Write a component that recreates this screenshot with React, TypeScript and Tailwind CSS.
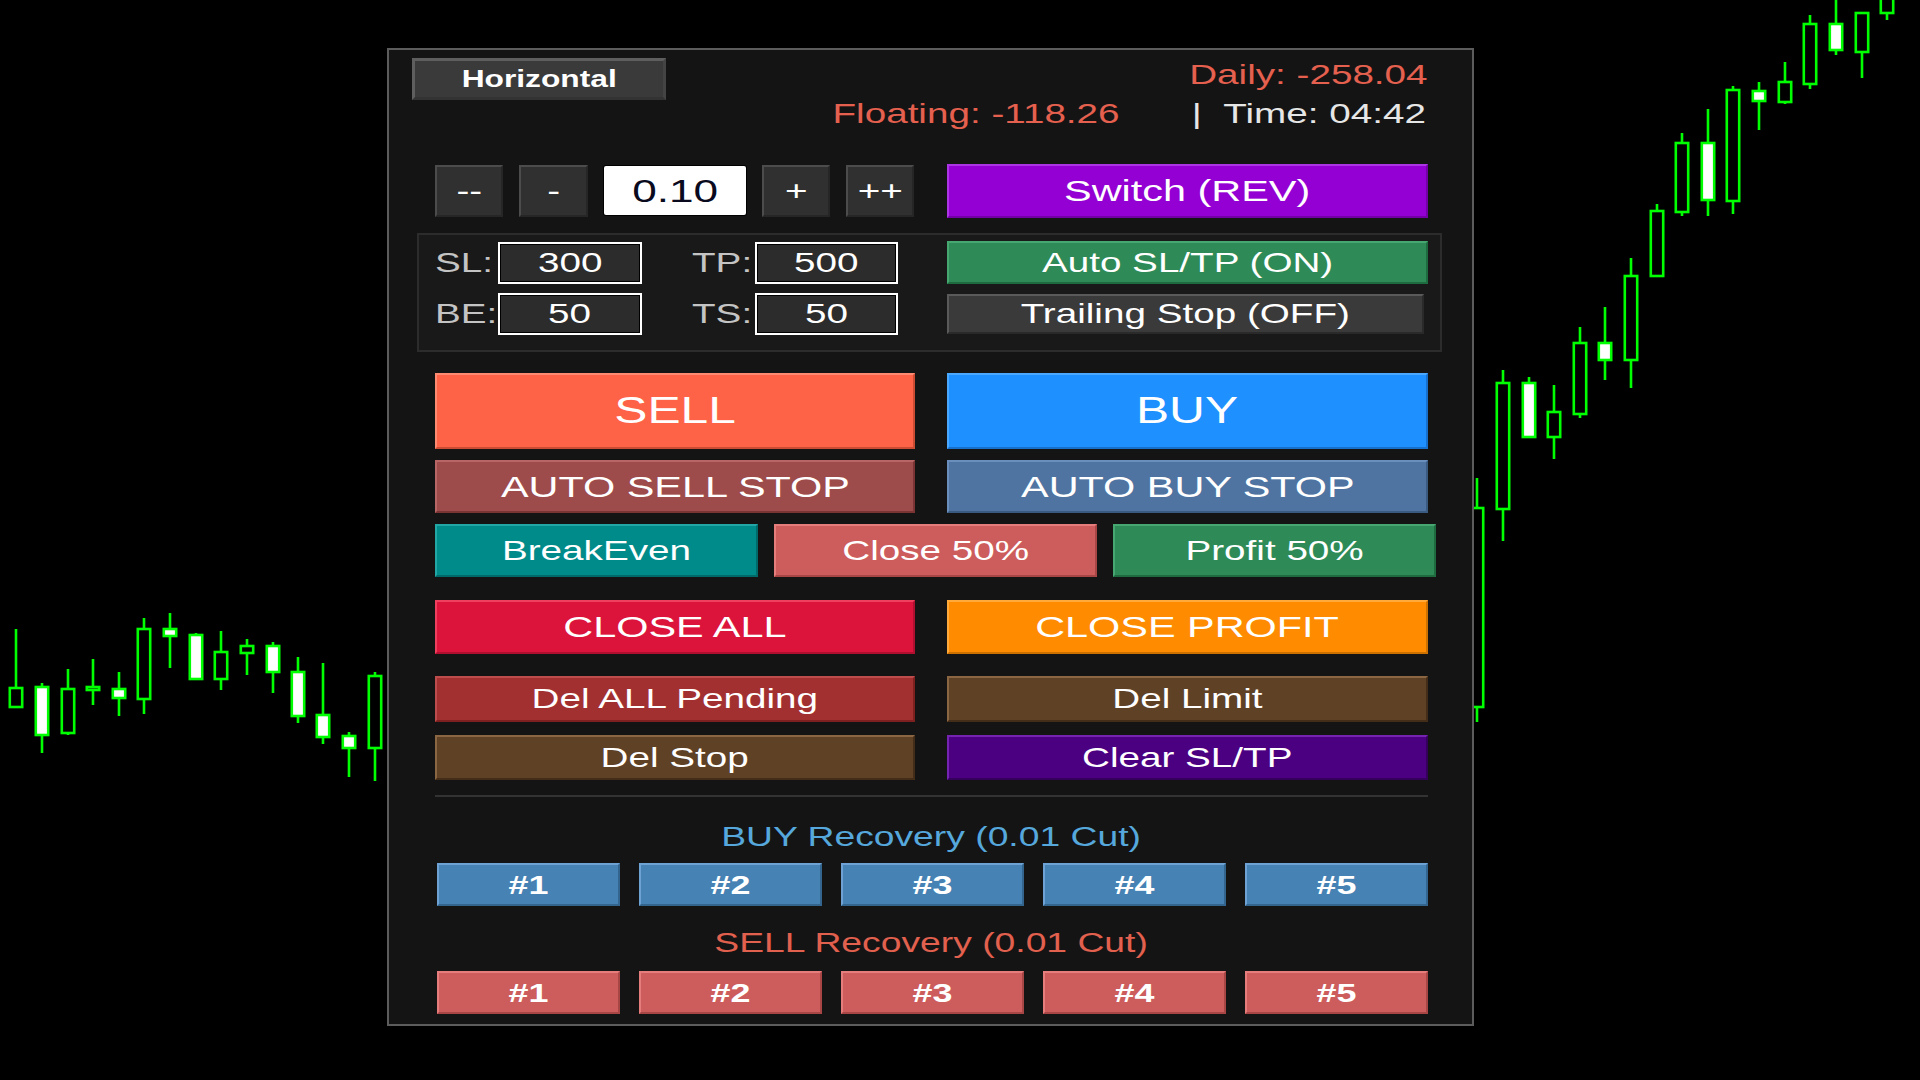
import React from 'react';

type Candle = [number, number, number, number, number, boolean];

// [x, high, low, bodyTop, bodyBottom, whiteBody]
const LEFT_CANDLES: Candle[] = [
  [16, 629, 707, 688, 707, false],
  [42, 683, 753, 687, 735, true],
  [68, 669, 735, 689, 733, false],
  [93, 659, 705, 687, 690, false],
  [119, 672, 716, 689, 698, true],
  [144, 618, 714, 629, 699, false],
  [170, 613, 668, 629, 636, true],
  [196, 633, 679, 635, 679, true],
  [221, 631, 690, 652, 679, false],
  [247, 639, 675, 646, 653, false],
  [273, 642, 693, 646, 672, true],
  [298, 657, 723, 672, 716, true],
  [323, 663, 744, 715, 737, true],
  [349, 732, 777, 736, 748, true],
  [375, 672, 781, 676, 748, false],
];

const RIGHT_CANDLES: Candle[] = [
  [1477, 478, 722, 508, 707, false],
  [1503, 370, 541, 383, 509, false],
  [1529, 377, 437, 383, 437, true],
  [1554, 385, 459, 412, 437, false],
  [1580, 327, 418, 343, 414, false],
  [1605, 307, 380, 343, 360, true],
  [1631, 258, 388, 276, 360, false],
  [1657, 204, 276, 211, 276, false],
  [1682, 133, 216, 143, 212, false],
  [1708, 109, 216, 143, 200, true],
  [1733, 86, 214, 90, 201, false],
  [1759, 82, 130, 91, 101, true],
  [1785, 62, 104, 82, 102, false],
  [1810, 15, 89, 24, 84, false],
  [1836, 0, 55, 24, 50, true],
  [1862, 12, 78, 13, 52, false],
  [1887, -10, 20, -5, 13, false],
];

const Chart = () => (
  <svg
    className="absolute inset-0"
    width={1920}
    height={1080}
    viewBox="0 0 1920 1080"
  >
    {[...LEFT_CANDLES, ...RIGHT_CANDLES].map(([x, hi, lo, top, bot, white], i) => (
      <g key={i} stroke="#00ff00" strokeWidth={2.6}>
        <line x1={x} x2={x} y1={hi} y2={top} />
        <line x1={x} x2={x} y1={bot} y2={lo} />
        <rect
          x={x - 6.2}
          y={top}
          width={12.4}
          height={Math.max(bot - top, 2)}
          fill={white ? '#ffffff' : '#000000'}
        />
      </g>
    ))}
  </svg>
);

const tones = {
  sell: 'bg-[#ff6347] border-t-[#ff8a72] border-l-[#ff8a72] border-b-[#cc4b33] border-r-[#cc4b33]',
  buy: 'bg-[#1e90ff] border-t-[#4ba8ff] border-l-[#4ba8ff] border-b-[#1670cc] border-r-[#1670cc]',
  autoSell: 'bg-[#9e4b4b] border-t-[#b86565] border-l-[#b86565] border-b-[#7a3434] border-r-[#7a3434]',
  autoBuy: 'bg-[#4f74a1] border-t-[#6a8fbd] border-l-[#6a8fbd] border-b-[#3a5a80] border-r-[#3a5a80]',
  teal: 'bg-[#008b8b] border-t-[#22a6a6] border-l-[#22a6a6] border-b-[#006a6a] border-r-[#006a6a]',
  indian: 'bg-[#cd5c5c] border-t-[#e57d7d] border-l-[#e57d7d] border-b-[#a84545] border-r-[#a84545]',
  green: 'bg-[#2e8b57] border-t-[#46a770] border-l-[#46a770] border-b-[#1f6b40] border-r-[#1f6b40]',
  crimson: 'bg-[#dc143c] border-t-[#f0405f] border-l-[#f0405f] border-b-[#b00f2f] border-r-[#b00f2f]',
  orange: 'bg-[#ff8c00] border-t-[#ffaa3a] border-l-[#ffaa3a] border-b-[#cc7000] border-r-[#cc7000]',
  brownRed: 'bg-[#a33030] border-t-[#bd4c4c] border-l-[#bd4c4c] border-b-[#7f2020] border-r-[#7f2020]',
  brown: 'bg-[#5f4126] border-t-[#8a6642] border-l-[#8a6642] border-b-[#432c18] border-r-[#432c18]',
  indigo: 'bg-[#4b0082] border-t-[#7424b0] border-l-[#7424b0] border-b-[#34005c] border-r-[#34005c]',
  violet: 'bg-[#9400d3] border-t-[#ac35e6] border-l-[#ac35e6] border-b-[#7200a6] border-r-[#7200a6]',
  gray: 'bg-[#3a3a3a] border-t-[#5a5a5a] border-l-[#5a5a5a] border-b-[#2a2a2a] border-r-[#2a2a2a]',
  dark: 'bg-[#303030] border-t-[#4c4c4c] border-l-[#4c4c4c] border-b-[#262626] border-r-[#262626]',
  steel: 'bg-[#4682b4] border-t-[#6ea2d4] border-l-[#6ea2d4] border-b-[#34658e] border-r-[#34658e]',
};

type Tone = keyof typeof tones;

const Txt = ({ children, className = '' }: { children: React.ReactNode; className?: string }) => (
  <span className={`inline-block whitespace-nowrap leading-none scale-x-[1.38] ${className}`}>
    {children}
  </span>
);

const Btn = ({
  label,
  tone,
  size,
  text = 'text-[28px]',
}: {
  label: string;
  tone: Tone;
  size: string;
  text?: string;
}) => (
  <div className={`flex items-center justify-center border-2 text-white ${tones[tone]} ${size}`}>
    <Txt className={text}>{label}</Txt>
  </div>
);

const ValueBox = ({ value, size }: { value: string; size: string }) => (
  <div className={`flex items-center justify-center border-2 border-white bg-[#2c2c2c] ring-1 ring-inset ring-black text-white ${size}`}>
    <Txt className="text-[28px]">{value}</Txt>
  </div>
);

const Label = ({ text }: { text: string }) => (
  <div className="flex w-[63px] items-center text-[#c4c4c4]">
    <Txt className="origin-left text-[28px]">{text}</Txt>
  </div>
);

export default function App() {
  return (
    <div className="relative h-[1080px] w-[1920px] overflow-hidden bg-black font-['Liberation_Sans',Arial,sans-serif]">
      <Chart />
      <div className="relative ml-[387px] mt-[48px] flex h-[978px] w-[1087px] flex-col border-2 border-[#5c5c5c] bg-[#141414]">
        {/* header */}
        <div className="flex h-[113px] justify-between">
          <div className="ml-[23px] mt-[8px] flex h-[42px] w-[254px] items-center justify-center border-[3px] border-t-[#5e5e5e] border-l-[#5e5e5e] border-b-[#333333] border-r-[#444444] bg-[#3a3a3a] text-white">
            <Txt className="text-[23px] font-bold">Horizontal</Txt>
          </div>
          <div className="mr-[44px] flex flex-col items-end pt-[9px]">
            <div className="flex h-[32px] w-[239px] items-center justify-center text-[#e5604e]">
              <Txt className="text-[28px]">Daily: -258.04</Txt>
            </div>
            <div className="mt-[7px] flex h-[32px] items-center">
              <div className="flex w-[294px] justify-center text-[#e5604e]">
                <Txt className="text-[28px]">Floating: -118.26</Txt>
              </div>
              <div className="ml-[67px] flex w-[238px] justify-center text-[#e6e6e6]">
                <Txt className="text-[28px]">{'|  Time: 04:42'.replace(/ /g, '\u00a0')}</Txt>
              </div>
            </div>
          </div>
        </div>

        {/* lot row */}
        <div className="ml-[46px] flex h-[55px] items-center gap-[16px]">
          <Btn label="--" tone="dark" size="h-[52px] w-[68px]" />
          <Btn label="-" tone="dark" size="h-[52px] w-[69px]" />
          <div className="flex h-[49px] w-[142px] items-center justify-center rounded-[2px] bg-white ring-1 ring-black">
            <Txt className="text-[32px] text-[#0a0a1e]">0.10</Txt>
          </div>
          <Btn label="+" tone="dark" size="h-[52px] w-[68px]" />
          <Btn label="++" tone="dark" size="h-[52px] w-[68px]" />
          <div className="ml-[17px]">
            <Btn label="Switch (REV)" tone="violet" size="h-[54px] w-[481px]" text="text-[30px]" />
          </div>
        </div>

        {/* SL / TP group */}
        <div className="ml-[28px] mt-[15px] flex h-[119px] w-[1025px] flex-col gap-[9px] border-2 border-[#2c2c2c] bg-[#191919] pl-[16px] pt-[6px]">
          <div className="flex h-[43px] items-center">
            <Label text="SL:" />
            <ValueBox value="300" size="h-[42px] w-[144px]" />
            <div className="ml-[50px] flex">
              <Label text="TP:" />
            </div>
            <ValueBox value="500" size="h-[42px] w-[143px]" />
            <div className="ml-[49px]">
              <Btn label="Auto SL/TP (ON)" tone="green" size="h-[43px] w-[481px]" />
            </div>
          </div>
          <div className="flex h-[42px] items-center">
            <Label text="BE:" />
            <ValueBox value="50" size="h-[42px] w-[144px]" />
            <div className="ml-[50px] flex">
              <Label text="TS:" />
            </div>
            <ValueBox value="50" size="h-[42px] w-[143px]" />
            <div className="ml-[49px]">
              <Btn label="Trailing Stop (OFF)" tone="gray" size="h-[40px] w-[477px]" />
            </div>
          </div>
        </div>

        {/* trade buttons */}
        <div className="ml-[46px] mt-[21px] flex gap-[32px]">
          <Btn label="SELL" tone="sell" size="h-[76px] w-[480px]" text="text-[36px]" />
          <Btn label="BUY" tone="buy" size="h-[76px] w-[481px]" text="text-[36px]" />
        </div>
        <div className="ml-[46px] mt-[11px] flex gap-[32px]">
          <Btn label="AUTO SELL STOP" tone="autoSell" size="h-[53px] w-[480px]" text="text-[30px]" />
          <Btn label="AUTO BUY STOP" tone="autoBuy" size="h-[53px] w-[481px]" text="text-[30px]" />
        </div>
        <div className="ml-[46px] mt-[11px] flex gap-[16px]">
          <Btn label="BreakEven" tone="teal" size="h-[53px] w-[323px]" />
          <Btn label="Close 50%" tone="indian" size="h-[53px] w-[323px]" />
          <Btn label="Profit 50%" tone="green" size="h-[53px] w-[323px]" />
        </div>
        <div className="ml-[46px] mt-[23px] flex gap-[32px]">
          <Btn label="CLOSE ALL" tone="crimson" size="h-[54px] w-[480px]" text="text-[30px]" />
          <Btn label="CLOSE PROFIT" tone="orange" size="h-[54px] w-[481px]" text="text-[30px]" />
        </div>
        <div className="ml-[46px] mt-[22px] flex gap-[32px]">
          <Btn label="Del ALL Pending" tone="brownRed" size="h-[46px] w-[480px]" />
          <Btn label="Del Limit" tone="brown" size="h-[46px] w-[481px]" />
        </div>
        <div className="ml-[46px] mt-[13px] flex gap-[32px]">
          <Btn label="Del Stop" tone="brown" size="h-[45px] w-[480px]" />
          <Btn label="Clear SL/TP" tone="indigo" size="h-[45px] w-[481px]" />
        </div>

        <div className="ml-[46px] mt-[15px] h-[2px] w-[993px] bg-[#333333]" />

        {/* recovery */}
        <div className="ml-[46px] mt-[24px] flex h-[32px] w-[993px] items-center justify-center text-[#56a8dc]">
          <Txt className="text-[27px]">BUY Recovery (0.01 Cut)</Txt>
        </div>
        <div className="ml-[48px] mt-[10px] flex gap-[19px]">
          {['#1', '#2', '#3', '#4', '#5'].map((n) => (
            <Btn key={n} label={n} tone="steel" size="h-[43px] w-[183px]" text="text-[26px] font-bold" />
          ))}
        </div>
        <div className="ml-[46px] mt-[21px] flex h-[32px] w-[993px] items-center justify-center text-[#e2604e]">
          <Txt className="text-[27px]">SELL Recovery (0.01 Cut)</Txt>
        </div>
        <div className="ml-[48px] mt-[12px] flex gap-[19px]">
          {['#1', '#2', '#3', '#4', '#5'].map((n) => (
            <Btn key={n} label={n} tone="indian" size="h-[43px] w-[183px]" text="text-[26px] font-bold" />
          ))}
        </div>
      </div>
    </div>
  );
}
